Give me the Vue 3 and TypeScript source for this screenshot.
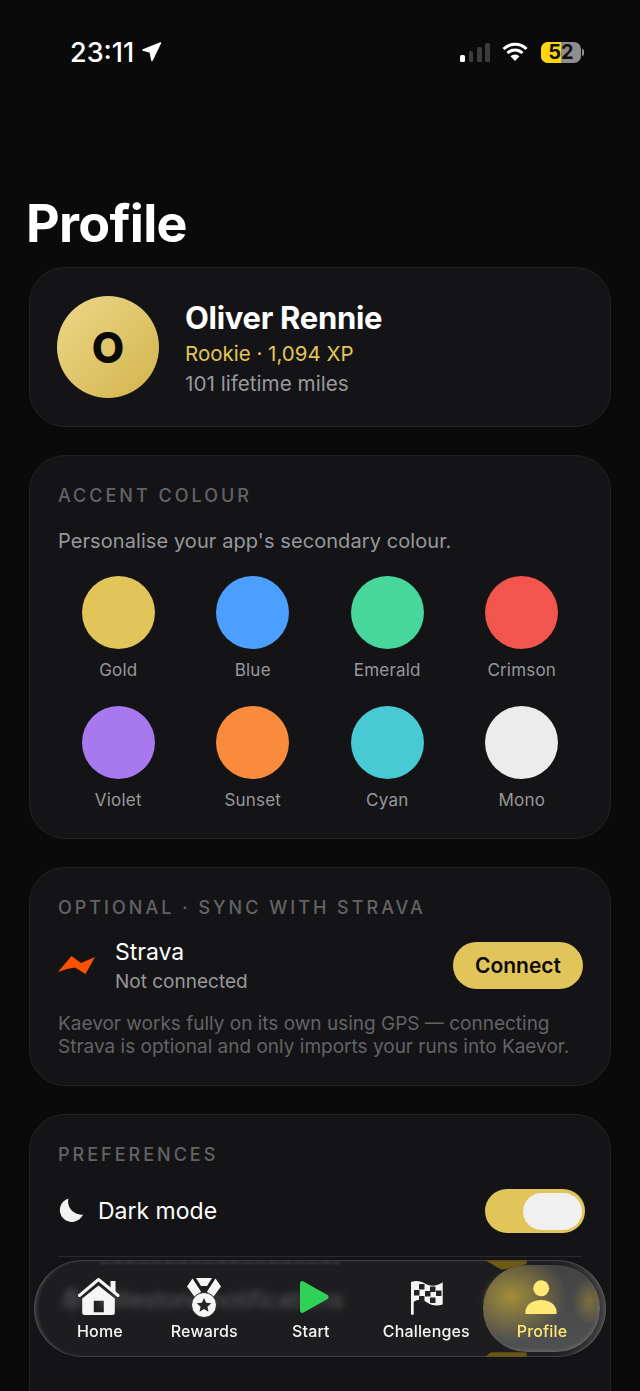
<script setup lang="ts">
interface Swatch {
  name: string;
  color: string;
}

const swatches: Swatch[] = [
  { name: 'Gold', color: '#e2c55a' },
  { name: 'Blue', color: '#4d9fff' },
  { name: 'Emerald', color: '#47d69b' },
  { name: 'Crimson', color: '#f2544e' },
  { name: 'Violet', color: '#a879ee' },
  { name: 'Sunset', color: '#f98b3c' },
  { name: 'Cyan', color: '#48c9d4' },
  { name: 'Mono', color: '#ececec' },
];

// dark squares of the chequered flag
const checks = [
  [11, 7], [22, 9.5],
  [6, 13], [17, 14], [28, 13.5],
  [11, 19], [22, 20.5],
];
</script>

<template>
  <div class="screen">
    <div class="status">
      <div class="status-left">
        <span class="time">23:11</span>
        <svg width="20" height="20" viewBox="0 0 20 20">
          <path d="M1 8 18.500 1 10 18.500 8.200 10z" fill="#fff" stroke="#fff" stroke-width="1.500" stroke-linejoin="round" />
        </svg>
      </div>
      <div class="status-right">
        <div class="signal">
          <i class="on" style="height: 7px"></i>
          <i style="height: 11px"></i>
          <i style="height: 15px"></i>
          <i style="height: 19px"></i>
        </div>
        <svg class="wifi" width="26" height="20" viewBox="0 0 26 20">
          <path d="M1.500 7a16.500 16.500 0 0 1 23 0M5.500 11a11 11 0 0 1 15 0" fill="none" stroke="#fff" stroke-width="3" />
          <path d="M8.500 14.200a6.600 6.600 0 0 1 9 0L13 19z" fill="#fff" />
        </svg>
        <div class="battery">
          <div class="battery-body">
            <span class="battery-fill"></span>
            <span class="battery-text">52</span>
          </div>
          <span class="battery-cap"></span>
        </div>
      </div>
    </div>

    <h1 class="title">Profile</h1>

    <section class="card profile-card">
      <div class="avatar">O</div>
      <div class="who">
        <div class="name">Oliver Rennie</div>
        <div class="rank">Rookie · 1,094 XP</div>
        <div class="miles">101 lifetime miles</div>
      </div>
    </section>

    <section class="card accent-card">
      <div class="heading">ACCENT COLOUR</div>
      <p class="hint">Personalise your app's secondary colour.</p>
      <div class="swatches">
        <div v-for="s in swatches" :key="s.name" class="swatch">
          <span class="dot" :style="{ background: s.color }"></span>
          <span class="swatch-name">{{ s.name }}</span>
        </div>
      </div>
    </section>

    <section class="card strava-card">
      <div class="heading">OPTIONAL · SYNC WITH STRAVA</div>
      <div class="strava-row">
        <svg class="strava-logo" width="38" height="20" viewBox="0 0 38 20">
          <path d="M0 17 13.500 1l9.500 7 14-6-9.500 17-10.500-6.500L9 14z" fill="#fc5200" />
        </svg>
        <div class="strava-text">
          <div class="strava-name">Strava</div>
          <div class="strava-state">Not connected</div>
        </div>
        <button class="connect">Connect</button>
      </div>
      <p class="strava-note">Kaevor works fully on its own using GPS — connecting Strava is optional and only imports your runs into Kaevor.</p>
    </section>

    <section class="card prefs-card">
      <div class="heading">PREFERENCES</div>
      <div class="pref">
        <svg width="28" height="28" viewBox="0 0 28 28">
          <path d="M10.500 1.500A12 12 0 1 0 25 17.500 13 13 0 0 1 10.500 1.500z" fill="#f2f2f2" />
        </svg>
        <span class="pref-label">Dark mode</span>
        <span class="toggle"><span class="knob"></span></span>
      </div>
      <div class="pref pref-line">
        <svg width="28" height="28" viewBox="0 0 28 28">
          <path d="M14 2a8 8 0 0 1 8 8c0 7 3 9 3 11H3c0-2 3-4 3-11a8 8 0 0 1 8-8zM11 23h6a3 3 0 0 1-6 0z" fill="#8a8a8a" />
        </svg>
        <span class="pref-label">Milestone notifications</span>
        <span class="toggle"><span class="knob"></span></span>
      </div>
    </section>

    <nav class="tabbar">
      <span class="smear smear-top"></span>
      <span class="smear smear-bottom"></span>
      <span class="ghost-line"></span>
      <div class="lens"></div>
      <div class="tab">
        <svg width="44" height="41" viewBox="0 0 44 41">
          <path d="M1.500 18.500 20.500 2.500 40 18.500" fill="none" stroke="#f5f5f5" stroke-width="3" stroke-linecap="round" stroke-linejoin="round" />
          <path d="M32.500 4h5v12l-5-4z" fill="#f5f5f5" />
          <path fill-rule="evenodd" d="M20.500 8.500 36.800 21.500V35.500a2.500 2.500 0 0 1-2.500 2.500H6.700a2.500 2.500 0 0 1-2.500-2.500V21.500zM15.800 23.700v11.600h10V23.700z" fill="#f5f5f5" />
        </svg>
        <span>Home</span>
      </div>
      <div class="tab tab-rewards">
        <svg width="36" height="41" viewBox="0 0 36 41">
          <path d="M10 1h16l-5 8h-6z" fill="#f5f5f5" />
          <path d="M6.500 1.500 14 13 15 15 9.500 21 1 9.500zM29.500 1.500 22 13 21 15 26.500 21 35 9.500z" fill="#f5f5f5" />
          <circle cx="18" cy="28" r="12.500" fill="#f5f5f5" stroke="#242426" stroke-width="1" />
          <path d="m18 21 2.100 4.800 5.200.5-3.900 3.400 1.100 5.100-4.500-2.700-4.500 2.700 1.100-5.100-3.900-3.400 5.200-.5z" fill="#242426" />
        </svg>
        <span>Rewards</span>
      </div>
      <div class="tab tab-start">
        <svg width="40" height="41" viewBox="0 0 40 41">
          <path d="M9 6.500c0-2 2-3 3.500-2l24 13.500c1.500 1 1.500 3 0 4l-24 13.500c-1.500 1-3.500 0-3.500-2z" fill="#30d158" />
        </svg>
        <span>Start</span>
      </div>
      <div class="tab tab-challenges">
        <svg width="36" height="41" viewBox="0 0 36 41">
          <path d="M3 5C8 3 13 4 17 6.500 23 10 29 9 34.700 5.300V27.500C29 29 24 29 19 25.500 14 22 9.500 22 5.700 25L5.700 37c0 1.200-2.700 1.200-2.700 0z" fill="#f5f5f5" />
          <g fill="#242426">
            <rect v-for="(c, i) in checks" :key="i" :x="c[0]" :y="c[1]" width="5.500" height="5.500" rx="0.500" />
          </g>
        </svg>
        <span>Challenges</span>
      </div>
      <div class="tab tab-profile active">
        <svg width="36" height="41" viewBox="0 0 36 41">
          <circle cx="17.200" cy="11.300" r="8" fill="#ffe873" />
          <path d="M3 37c-1.200 0-1.700-.5-1.700-1.500C1.300 28 8 23 17 23s15.700 5 15.700 12.500c0 1-.5 1.500-1.700 1.500z" fill="#ffe873" />
        </svg>
        <span>Profile</span>
      </div>
    </nav>
  </div>
</template>

<style scoped>
.screen {
  position: relative;
  width: 640px;
  height: 1391px;
  overflow: hidden;
  background: #0a0a0a;
  font-family: Inter, "Liberation Sans", sans-serif;
  color: #fff;
}

.status {
  display: flex;
  justify-content: space-between;
  align-items: center;
  height: 24px;
  padding: 40px 56px 0 70px;
}
.status-left {
  display: flex;
  align-items: center;
  gap: 8px;
}
.time {
  font-size: 27px;
  font-weight: 500;
}
.status-right {
  display: flex;
  align-items: center;
}
.signal {
  display: flex;
  align-items: flex-end;
  gap: 3.500px;
  height: 19px;
  margin: 0 12px 0 2px;
}
.signal i {
  width: 4.800px;
  border-radius: 1.500px;
  background: #3c3c3c;
}
.signal i.on {
  background: #fff;
}
.wifi {
  margin-right: 13px;
}
.battery {
  display: flex;
  align-items: center;
  gap: 1px;
}
.battery-body {
  position: relative;
  width: 40px;
  height: 21px;
  border-radius: 7px;
  overflow: hidden;
  background: #8e8e8e;
  display: flex;
  align-items: center;
  justify-content: center;
}
.battery-fill {
  position: absolute;
  left: 0;
  top: 0;
  bottom: 0;
  width: 49%;
  background: #ffd60a;
}
.battery-text {
  position: relative;
  color: #111;
  font-size: 20px;
  font-weight: 700;
}
.battery-cap {
  width: 2px;
  height: 7px;
  border-radius: 0 2px 2px 0;
  background: #8e8e8e;
}

.title {
  margin: 130px 0 13px 26px;
  font-size: 52px;
  line-height: 60px;
  font-weight: 700;
  letter-spacing: -0.700px;
}

.card {
  box-sizing: border-box;
  width: 582px;
  margin: 0 0 28px 29px;
  padding: 28px;
  border: 1px solid #232326;
  border-radius: 36px;
  background: #141416;
}

.profile-card {
  display: flex;
  align-items: center;
  gap: 26px;
  height: 160px;
  padding-left: 27px;
}
.avatar {
  width: 102px;
  height: 102px;
  flex: none;
  border-radius: 50%;
  display: flex;
  align-items: center;
  justify-content: center;
  background: linear-gradient(135deg, #ecd88a, #d3b44c);
  color: #0a0a0a;
  font-size: 42px;
  font-weight: 800;
}
.who {
  padding-top: 4px;
}
.name {
  font-size: 31px;
  line-height: 38px;
  font-weight: 700;
  letter-spacing: -0.300px;
}
.rank {
  margin-top: 2px;
  font-size: 20.500px;
  line-height: 30px;
  color: #e2c55a;
}
.miles {
  font-size: 20.700px;
  line-height: 30px;
  color: #98989c;
}

.heading {
  font-size: 18px;
  line-height: 24px;
  font-weight: 500;
  letter-spacing: 3px;
  color: #636366;
}

.accent-card {
  height: 384px;
}
.hint {
  margin: 18px 0 0;
  font-size: 20px;
  line-height: 30px;
  letter-spacing: 0.080px;
  color: #98989c;
}
.swatches {
  display: grid;
  grid-template-columns: repeat(4, 1fr);
  column-gap: 14px;
  row-gap: 23px;
  margin-top: 20px;
}
.swatch {
  display: flex;
  flex-direction: column;
  align-items: center;
  gap: 8px;
}
.dot {
  width: 73px;
  height: 73px;
  border-radius: 50%;
}
.swatch-name {
  font-size: 17px;
  line-height: 26px;
  letter-spacing: 0.200px;
  color: #98989c;
}

.strava-card {
  height: 219px;
}
.strava-row {
  display: flex;
  align-items: center;
  margin-top: 17px;
  margin-right: -1px;
}
.strava-logo {
  flex: none;
  margin: 0 19px 3px 0;
}
.strava-text {
  flex: 1;
}
.strava-name {
  font-size: 23px;
  line-height: 31px;
}
.strava-state {
  font-size: 19px;
  line-height: 28px;
  color: #98989c;
}
.connect {
  width: 130px;
  height: 47px;
  margin-bottom: 3px;
  border: 0;
  border-radius: 24px;
  background: #e2c55a;
  color: #0a0a0a;
  font-family: inherit;
  font-size: 21px;
  font-weight: 600;
}
.strava-note {
  margin: 16px 0 0;
  font-size: 19px;
  line-height: 23px;
  color: #636366;
}

.prefs-card {
  height: 400px;
}
.pref {
  box-sizing: border-box;
  display: flex;
  align-items: center;
  height: 85px;
  margin-top: 3.500px;
  padding-bottom: 4px;
  gap: 12px;
}
.pref-line {
  margin-top: 0;
  padding-bottom: 0;
  border-top: 1px solid #2a2a2d;
  height: 88px;
}
.pref-label {
  flex: 1;
  font-size: 23px;
}
.toggle {
  box-sizing: border-box;
  display: flex;
  justify-content: flex-end;
  align-items: center;
  width: 100px;
  height: 44px;
  margin-right: -3px;
  padding: 0 3px;
  border-radius: 22px;
  background: #e2c55a;
}
.knob {
  width: 59px;
  height: 37px;
  border-radius: 19px;
  background: #f0f0f0;
}

.tabbar {
  position: absolute;
  left: 34px;
  top: 1260px;
  box-sizing: border-box;
  width: 572px;
  height: 97px;
  padding: 17px 0 0 43px;
  display: flex;
  border-radius: 49px;
  background: rgba(33, 33, 35, 0.76);
  backdrop-filter: blur(3px);
  box-shadow:
    inset 0 0 0 1px rgba(255, 255, 255, 0.09),
    inset 4px 0 4px -2px rgba(255, 255, 255, 0.2),
    inset -10px 0 8px -4px rgba(255, 255, 255, 0.22);
}
.tab {
  position: relative;
  display: flex;
  flex-direction: column;
  align-items: center;
  gap: 3px;
  font-size: 16px;
  line-height: 20px;
  font-weight: 500;
  letter-spacing: 0.150px;
  color: #f5f5f5;
}
.tab.active {
  color: #ffe873;
}
.tab-rewards {
  margin-left: 48px;
}
.tab-start {
  margin-left: 53px;
}
.tab-challenges {
  margin-left: 52px;
}
.tab-profile {
  margin-left: 47px;
}
.lens {
  position: absolute;
  left: 448.500px;
  top: 5px;
  width: 117.500px;
  height: 87px;
  border-radius: 44px;
  background:
    radial-gradient(ellipse 56px 46px at 24% 36%, rgba(205, 175, 50, 0.68), transparent),
    radial-gradient(ellipse 17px 24px at 91% 42%, rgba(190, 160, 50, 0.45), transparent),
    linear-gradient(#434344, #505052);
  box-shadow: inset -2px -2px 3px rgba(255, 255, 255, 0.1);
}
.smear {
  position: absolute;
  left: 451px;
  width: 42px;
  background: #6d5a14;
  filter: blur(1px);
}
.smear-top {
  top: 0;
  height: 10px;
  clip-path: polygon(0 0, 100% 0, 100% 40%, 40% 100%);
}
.smear-bottom {
  bottom: 0;
  height: 5px;
  clip-path: polygon(15% 0, 100% 0, 100% 100%, 0 100%);
}
.ghost-line {
  position: absolute;
  left: 66px;
  top: 2px;
  width: 240px;
  height: 2px;
  background: repeating-linear-gradient(90deg, #3a3a3c 0 9px, #2a2a2c 9px 13px);
  filter: blur(1.200px);
}
</style>

<style>
html,
body {
  background: #0a0a0a;
}
</style>
